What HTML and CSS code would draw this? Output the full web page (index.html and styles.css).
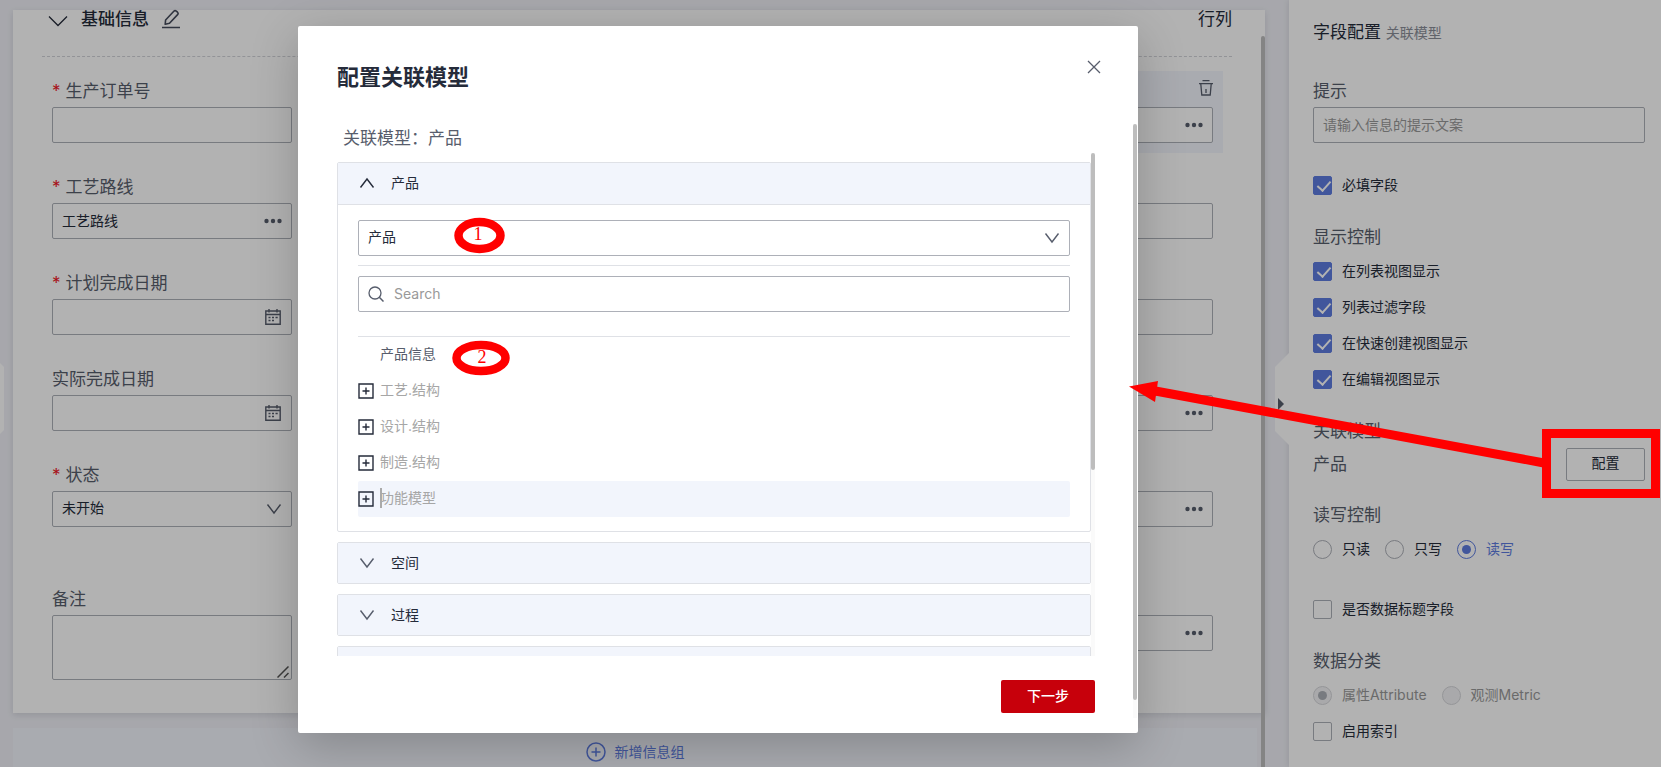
FILE: index.html
```html
<!DOCTYPE html>
<html lang="zh-CN">
<head>
<meta charset="utf-8">
<title>配置关联模型</title>
<link rel="stylesheet" href="styles.css">
</head>
<body>
<svg class="sprite" aria-hidden="true">
  <symbol id="i-down" viewBox="0 0 16 16"><path d="M1.500 3.500 8 12l6.500-8.500" fill="none" stroke="currentColor" stroke-width="1.400"/></symbol>
  <symbol id="i-up" viewBox="0 0 16 16"><path d="M1.500 12.500 8 4l6.500 8.500" fill="none" stroke="currentColor" stroke-width="1.400"/></symbol>
  <symbol id="i-wide" viewBox="0 0 20 12"><path d="M1 1.500 10 10.500l9-9" fill="none" stroke="currentColor" stroke-width="1.300"/></symbol>
  <symbol id="i-dots" viewBox="0 0 18 18"><g fill="currentColor"><circle cx="2.500" cy="9" r="2.200"/><circle cx="9" cy="9" r="2.200"/><circle cx="15.500" cy="9" r="2.200"/></g></symbol>
  <symbol id="i-cal" viewBox="0 0 18 18"><path d="M1.800 3h14.400v13.200H1.800zM1.800 6.500h14.400M5 1v3.500M13 1v3.500" fill="none" stroke="currentColor" stroke-width="1.400"/><path d="M4.500 9.500h2M8 9.500h2M11.500 9.500h2.200M4.500 12.500h2M8 12.500h2" stroke="currentColor" stroke-width="1.300"/></symbol>
  <symbol id="i-plusbox" viewBox="0 0 16 16"><path d="M1 1h14v14H1zM8 4.500v7M4.500 8h7" fill="none" stroke="currentColor" stroke-width="1.400"/></symbol>
</svg>

<div class="app">
  <main class="main">
    <section class="card">
      <header class="card-head">
        <svg class="wide" aria-hidden="true"><use href="#i-wide"/></svg>
        <h2 class="card-title">基础信息</h2>
        <svg class="pencil" viewBox="0 0 20 20" aria-hidden="true"><path d="M4.200 15.200 4.600 11 12.800 2.200Q14 1 15.300 2.100L16.500 3.200Q17.700 4.400 16.600 5.600L8.500 14.200ZM1 18.500h18" fill="none" stroke="currentColor" stroke-width="1.600" stroke-linejoin="round"/></svg>
        <span class="card-extra">行列</span>
      </header>
      <div class="grid">
        <div class="cell">
          <label class="label required" for="order">生产订单号</label>
          <div class="control"><input id="order" class="box" type="text"></div>
        </div>
        <div class="cell last active">
          <div class="label tools"><button class="icon-btn" aria-label="删除"><svg class="i18" viewBox="0 0 18 18" aria-hidden="true"><path d="M5.500 1.700h7M2 4.700h14M3.800 5l1 11h8.400l1-11M9 10v4" fill="none" stroke="currentColor" stroke-width="1.300"/></svg></button></div>
          <div class="control"><input class="box" type="text" aria-label="关联模型"><button class="suffix" aria-label="选择"><svg class="i18"><use href="#i-dots"/></svg></button></div>
        </div>
        <div class="cell">
          <label class="label required" for="route">工艺路线</label>
          <div class="control"><input id="route" class="box" type="text" value="工艺路线"><button class="suffix" aria-label="选择"><svg class="i18"><use href="#i-dots"/></svg></button></div>
        </div>
        <div class="cell last">
          <div class="label"></div>
          <div class="control"><input class="box" type="text" aria-label="字段"></div>
        </div>
        <div class="cell">
          <label class="label required" for="plan">计划完成日期</label>
          <div class="control"><input id="plan" class="box" type="text"><button class="suffix" aria-label="选择日期"><svg class="i18"><use href="#i-cal"/></svg></button></div>
        </div>
        <div class="cell last">
          <div class="label"></div>
          <div class="control"><input class="box" type="text" aria-label="字段"></div>
        </div>
        <div class="cell">
          <label class="label" for="actual">实际完成日期</label>
          <div class="control"><input id="actual" class="box" type="text"><button class="suffix" aria-label="选择日期"><svg class="i18"><use href="#i-cal"/></svg></button></div>
        </div>
        <div class="cell last">
          <div class="label"></div>
          <div class="control"><input class="box" type="text" aria-label="字段"><button class="suffix" aria-label="选择"><svg class="i18"><use href="#i-dots"/></svg></button></div>
        </div>
        <div class="cell">
          <label class="label required" for="state">状态</label>
          <div class="control"><select id="state" class="box"><option>未开始</option></select><svg class="suffix i16"><use href="#i-down"/></svg></div>
        </div>
        <div class="cell last">
          <div class="label"></div>
          <div class="control"><input class="box" type="text" aria-label="字段"><button class="suffix" aria-label="选择"><svg class="i18"><use href="#i-dots"/></svg></button></div>
        </div>
        <div class="cell spaced">
          <label class="label" for="note">备注</label>
          <div class="control"><textarea id="note" class="box area"></textarea><svg class="grip" viewBox="0 0 12 12" aria-hidden="true"><path d="M.5 11.500l11-11M7 11.500 11.500 7" stroke="currentColor" stroke-width="1.500"/></svg></div>
        </div>
        <div class="cell last spaced">
          <div class="label"></div>
          <div class="control"><input class="box" type="text" aria-label="字段"><button class="suffix" aria-label="选择"><svg class="i18"><use href="#i-dots"/></svg></button></div>
        </div>
      </div>
    </section>
    <button class="add-group">
      <svg class="i20" viewBox="0 0 20 20" aria-hidden="true"><circle cx="10" cy="10" r="9" fill="none" stroke="currentColor" stroke-width="1.500"/><path d="M10 5.500v9M5.500 10h9" stroke="currentColor" stroke-width="1.500"/></svg>
      新增信息组
    </button>
    <div class="page-bar"></div>
    <div class="left-handle"></div>
  </main>

  <aside class="side">
    <button class="side-handle" aria-label="收起"></button>
    <h2 class="side-title">字段配置 <small>关联模型</small></h2>
    <label class="label tip" for="tip">提示</label>
    <input id="tip" class="box" type="text" placeholder="请输入信息的提示文案">
    <div class="choices solo"><label class="choice"><input type="checkbox" checked>必填字段</label></div>
    <h3 class="label group">显示控制</h3>
    <div class="choices"><label class="choice"><input type="checkbox" checked>在列表视图显示</label></div>
    <div class="choices"><label class="choice"><input type="checkbox" checked>列表过滤字段</label></div>
    <div class="choices"><label class="choice"><input type="checkbox" checked>在快速创建视图显示</label></div>
    <div class="choices"><label class="choice"><input type="checkbox" checked>在编辑视图显示</label></div>
    <h3 class="label group">关联模型</h3>
    <div class="model-row"><span>产品</span><button class="config">配置</button></div>
    <h3 class="label group">读写控制</h3>
    <div class="choices">
      <label class="choice"><input type="radio" name="rw">只读</label>
      <label class="choice"><input type="radio" name="rw">只写</label>
      <label class="choice picked"><input type="radio" name="rw" checked>读写</label>
    </div>
    <div class="choices solo"><label class="choice"><input type="checkbox">是否数据标题字段</label></div>
    <h3 class="label group">数据分类</h3>
    <div class="choices">
      <label class="choice off"><input type="radio" name="kind" checked disabled>属性Attribute</label>
      <label class="choice off"><input type="radio" name="kind" disabled>观测Metric</label>
    </div>
    <div class="choices"><label class="choice"><input type="checkbox">启用索引</label></div>
  </aside>
</div>

<div class="scrim">
  <div class="modal" role="dialog" aria-labelledby="dlg">
    <header class="modal-head">
      <h1 id="dlg" class="modal-title">配置关联模型</h1>
      <button class="icon-btn close" aria-label="关闭"><svg class="i14" viewBox="0 0 14 14" aria-hidden="true"><path d="M1 1l12 12M13 1 1 13" stroke="currentColor" stroke-width="1.300"/></svg></button>
    </header>
    <p class="current">关联模型：产品</p>
    <div class="list">
      <section class="panel">
        <button class="panel-head open"><svg class="i16"><use href="#i-up"/></svg>产品</button>
        <div class="panel-body">
          <div class="control"><select class="box" aria-label="产品"><option>产品</option></select><svg class="suffix i16"><use href="#i-down"/></svg></div>
          <hr class="rule">
          <div class="control">
            <svg class="prefix" viewBox="0 0 16 16" aria-hidden="true"><circle cx="7" cy="7" r="6" fill="none" stroke="currentColor" stroke-width="1.300"/><path d="M11.300 11.300 15.500 15.500" stroke="currentColor" stroke-width="1.500"/></svg>
            <input class="box search" type="text" placeholder="Search" aria-label="Search">
          </div>
          <hr class="rule second">
          <ul class="tree">
            <li class="node ready"><span class="gap"></span>产品信息</li>
            <li class="node"><svg class="plus"><use href="#i-plusbox"/></svg>工艺.结构</li>
            <li class="node"><svg class="plus"><use href="#i-plusbox"/></svg>设计.结构</li>
            <li class="node"><svg class="plus"><use href="#i-plusbox"/></svg>制造.结构</li>
            <li class="node hover"><svg class="plus"><use href="#i-plusbox"/></svg><span class="caret">功能模型</span></li>
          </ul>
        </div>
      </section>
      <section class="panel"><button class="panel-head"><svg class="i16"><use href="#i-down"/></svg>空间</button></section>
      <section class="panel"><button class="panel-head"><svg class="i16"><use href="#i-down"/></svg>过程</button></section>
      <section class="panel"><button class="panel-head" aria-label="更多"></button></section>
      <div class="list-bar"></div>
    </div>
    <footer class="modal-foot"><button class="next">下一步</button></footer>
    <div class="modal-bar"></div>
  </div>
</div>

<svg class="notes" width="1661" height="767" viewBox="0 0 1661 767" aria-hidden="true">
  <g fill="#fff" stroke="#f00">
    <ellipse cx="479.500" cy="235.500" rx="21" ry="13.500" stroke-width="8.500"/>
    <ellipse cx="481" cy="358" rx="24.500" ry="13" stroke-width="8.500"/>
    <rect x="1546.500" y="433.500" width="109" height="60" fill="none" stroke-width="9"/>
    <path d="M1150 390 1544 463" fill="none" stroke-width="9"/>
  </g>
  <path d="M1129 386.500 1158 381 1155 402z" fill="#f00"/>
  <text class="mark" x="478" y="240">1</text>
  <text class="mark" x="482" y="363">2</text>
</svg>
</body>
</html>
```
FILE: styles.css
```css
* { box-sizing: border-box; }
body {
  margin: 0;
  height: 100vh;
  overflow: hidden;
  position: relative;
  font: 14px/20px Inter, "Noto Sans CJK SC", sans-serif;
  color: #252b3a;
  background: #eff0f6;
}
button, input, select, textarea { font: inherit; color: inherit; }
button { padding: 0; border: 0; background: none; }
h1, h2, h3, p, ul { margin: 0; padding: 0; font-weight: 400; }
.sprite { position: absolute; width: 0; height: 0; }
.i14 { width: 14px; height: 14px; display: block; }
.i16 { width: 16px; height: 16px; }
.i18 { width: 18px; height: 18px; display: block; }
.i20 { width: 20px; height: 20px; }

.app { display: flex; height: 100%; }
.main {
  flex: 1;
  position: relative;
  display: flex;
  flex-direction: column;
  gap: 15px;
  padding: 10px 24px 0 13px;
}
.card {
  background: #fff;
  padding: 0 33px 33px 29px;
  box-shadow: 0 2px 6px rgba(60, 60, 80, .15);
}
.card-head {
  display: flex;
  align-items: center;
  height: 47px;
  padding-bottom: 28px;
  border-bottom: 1px dashed #d2d3d8;
}
.wide { width: 20px; height: 12px; margin: 4px 13px 0 6px; }
.card-title { font-size: 17px; line-height: 18px; font-weight: 500; }
.pencil { width: 20px; height: 20px; margin-left: 12px; color: #464c5c; }
.card-extra { margin-left: auto; font-size: 17px; line-height: 18px; }

.grid {
  display: grid;
  grid-template-columns: repeat(4, 22%);
  justify-content: space-between;
  row-gap: 14px;
  padding: 14px 9px 0 0;
}
.cell { grid-column: 1; padding: 0 10px 10px; }
.cell.last { grid-column: 4; }
.cell.active { background: #f2f5fc; }
.cell.spaced { margin-top: 28px; padding-bottom: 0; }
.label {
  display: block;
  height: 36px;
  padding-top: 4px;
  font-size: 17px;
  line-height: 32px;
  color: #575d6c;
}
.label.required::before { content: "*"; color: #f01828; margin-right: 5px; }
.label.tools { display: flex; justify-content: flex-end; align-items: center; padding: 0 0 2px; }
.tools .icon-btn { margin-right: -2px; }
.icon-btn { color: #575d6c; }
.control { position: relative; display: flex; }
.box {
  display: block;
  width: 100%;
  height: 36px;
  padding: 0 9px 2px;
  border: 1px solid #adb0b8;
  border-radius: 2px;
  background: #fff;
  appearance: none;
  outline: 0;
}
.box::placeholder { color: #999; }
.area { height: 65px; resize: none; }
.suffix { position: absolute; right: 10px; top: 9px; color: #575d6c; }
.suffix.i16 { top: 10px; }
.grip { position: absolute; right: 3px; bottom: 2px; width: 12px; height: 12px; color: #555; }

.add-group {
  flex: 1;
  min-height: 48px;
  display: flex;
  justify-content: center;
  align-items: center;
  gap: 9px;
  margin-right: 8px;
  background: #f2f5fc;
  color: #5e7ce0;
}
.page-bar {
  position: absolute;
  right: 24px;
  top: 36px;
  bottom: 0;
  width: 4px;
  border-radius: 2px 2px 0 0;
  background: #bdbdbd;
}
.left-handle {
  position: absolute;
  left: 0;
  top: 363px;
  width: 4px;
  height: 71px;
  background: #fff;
  clip-path: polygon(0 0, 100% 4px, 100% 67px, 0 100%);
}

.side {
  position: relative;
  width: 372px;
  padding: 15px 16px 0 24px;
  background: #fff;
  box-shadow: 0 0 6px rgba(60, 60, 80, .15);
}
.side-handle {
  position: absolute;
  left: -14px;
  top: 353px;
  width: 14px;
  height: 92px;
  background: #fff;
  clip-path: polygon(100% 0, 0 14px, 0 78px, 100% 100%);
}
.side-handle::after {
  content: "";
  position: absolute;
  left: 3px;
  top: 45px;
  border: 6px solid transparent;
  border-left-color: #575d6c;
  border-right: 0;
}
.side-title { font-size: 17px; line-height: 34px; }
.side-title small { font-size: 14px; color: #8a8e99; }
.tip { margin-top: 21px; }
.group { margin-top: 14px; }
.choices { display: flex; gap: 15px; height: 36px; align-items: center; }
.choices.solo { margin-top: 24px; }
.choice { display: flex; align-items: center; gap: 10px; }
.choice input {
  position: relative;
  width: 19px;
  height: 19px;
  margin: 0;
  border: 1px solid #adb0b8;
  border-radius: 2px;
  appearance: none;
  background: #fff;
}
.choice input[type="radio"] { border-radius: 50%; }
.choice input[type="checkbox"]:checked { background: #5e7ce0; border-color: #5e7ce0; }
.choice input[type="checkbox"]:checked::after {
  content: "";
  position: absolute;
  left: 6px;
  top: 1px;
  width: 6px;
  height: 11px;
  border: solid #fff;
  border-width: 0 2px 2px 0;
  transform: rotate(42deg);
}
.choice input[type="radio"]:checked { border-color: #5e7ce0; }
.choice input[type="radio"]:checked::after {
  content: "";
  position: absolute;
  inset: 4px;
  border-radius: 50%;
  background: #5e7ce0;
}
.picked { color: #5e7ce0; }
.off { color: #999; }
.choice input[type="radio"]:disabled { background: #f3f3f5; border-color: #d5d6da; }
.choice input[type="radio"]:disabled::after { background: #adb0b8; }
.model-row {
  display: flex;
  justify-content: space-between;
  align-items: center;
  font-size: 17px;
  line-height: 34px;
  color: #575d6c;
}
.config {
  width: 79px;
  height: 33px;
  padding-bottom: 2px;
  border: 1px solid #adb0b8;
  border-radius: 2px;
  font-size: 14px;
  line-height: 20px;
  color: #252b3a;
}

.scrim {
  position: absolute;
  inset: 0;
  padding: 26px 0 34px 298px;
  background: rgba(0, 0, 0, .3);
}
.modal {
  position: relative;
  display: flex;
  flex-direction: column;
  width: 840px;
  height: 100%;
  padding: 32px 43px 20px 39px;
  border-radius: 2px;
  background: #fff;
  box-shadow: 0 12px 48px rgba(0, 0, 0, .22);
}
.modal-head { display: flex; justify-content: space-between; align-items: flex-start; }
.modal-title { font-size: 22px; line-height: 38px; font-weight: 700; }
.close { padding: 2px; margin: 0 -8px 0 0; }
.current { padding: 27px 6px 0; font-size: 17px; line-height: 30px; color: #575d6c; }
.list {
  position: relative;
  flex: 1;
  min-height: 0;
  overflow: hidden;
  display: flex;
  flex-direction: column;
  gap: 10px;
  padding: 9px 4px 0 0;
}
.panel { flex: none; border: 1px solid #dfe1e6; border-radius: 2px; }
.panel-head {
  display: flex;
  align-items: center;
  gap: 16px;
  width: 100%;
  height: 40px;
  padding: 0 21px 1px;
  background: #f2f5fc;
}
.panel-head .i16 { color: #575d6c; }
.panel-head.open { height: 42px; padding-bottom: 2px; border-bottom: 1px solid #dfe1e6; }
.panel-head.open .i16 { color: #252b3a; }
.panel-body { padding: 15px 20px 14px; }
.rule { margin: 9px 0 10px; border: 0; border-top: 1px solid #dfe1e6; }
.rule.second { margin: 24px 0 0; }
.prefix { position: absolute; left: 10px; top: 10px; width: 16px; height: 16px; color: #575d6c; }
.search { padding-left: 35px; }
.tree { list-style: none; }
.node {
  display: flex;
  align-items: center;
  gap: 6px;
  height: 36px;
  padding-bottom: 2px;
  border-radius: 2px;
  color: #a6a6a6;
}
.node.ready { color: #575d6c; }
.node.hover { background: #f2f5fc; }
.plus { width: 16px; height: 16px; margin-top: 2px; color: #252b3a; }
.gap { width: 16px; }
.caret { position: relative; }
.caret::before {
  content: "";
  position: absolute;
  left: 0;
  top: 0;
  width: 2px;
  height: 20px;
  background: #aaa;
}
.list-bar, .modal-bar { position: absolute; width: 4px; background: #fafafa; }
.list-bar { right: 0; top: 0; bottom: 0; }
.modal-bar { right: 1px; top: 98px; bottom: 15px; }
.list-bar::before, .modal-bar::before {
  content: "";
  display: block;
  height: 63%;
  border-radius: 2px;
  background: #bdbdbd;
}
.modal-bar::before { height: 97%; }
.modal-foot { display: flex; justify-content: flex-end; padding-top: 24px; }
.next {
  width: 94px;
  height: 33px;
  padding-bottom: 2px;
  border-radius: 2px;
  background: #c7000b;
  color: #fff;
  font-weight: 500;
}
.notes { position: absolute; left: 0; top: 0; pointer-events: none; }
.mark { font: 18px "Liberation Serif", serif; fill: #f00; text-anchor: middle; }
```
